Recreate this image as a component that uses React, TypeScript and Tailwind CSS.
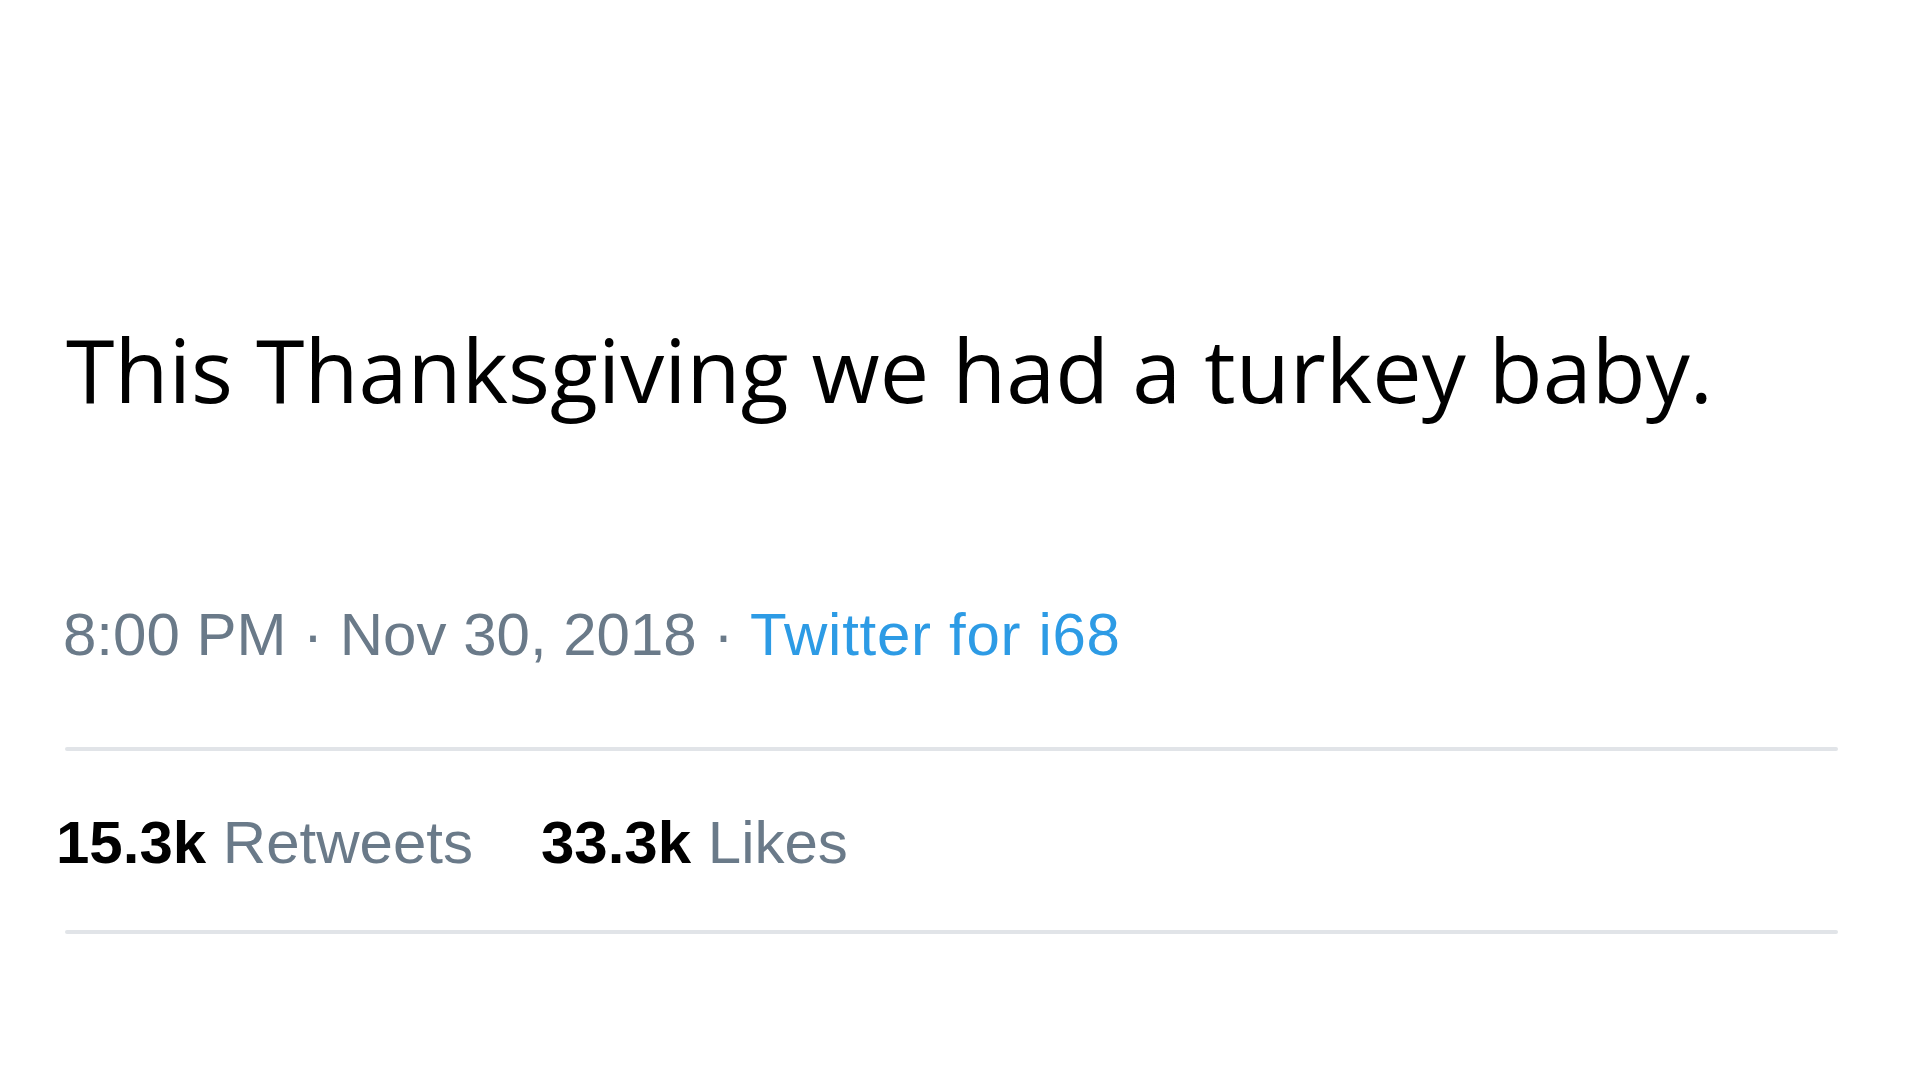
export default function App() {
  return (
    <div className="min-h-screen w-full bg-white">
      <div className="flex flex-col pt-[325px]">
        {/* tweet text */}
        <p
          className="pl-[66px] text-[88px] tracking-[0.1px] leading-none text-black whitespace-nowrap"
          style={{ fontFamily: '"Open Sans", sans-serif' }}
        >
          This Thanksgiving we had a turkey baby.
        </p>

        {/* timestamp + source */}
        <div
          className="mt-[192px] pl-[63px] text-[60px] leading-none text-[#6a7a89] whitespace-nowrap"
          style={{ fontFamily: '"Liberation Sans", Arial, sans-serif' }}
        >
          <span>8:00 PM</span>
          <span> · </span>
          <span>Nov 30, 2018</span>
          <span> · </span>
          <span className="tracking-[0.7px] text-[#2d9be5]">Twitter for i68</span>
        </div>

        <div className="mt-[82px] ml-[65px] h-[4px] w-[1773px] rounded-full bg-[#e1e4e8]" />

        {/* counts */}
        <div
          className="mt-[62px] flex items-baseline gap-[68px] pl-[56px] text-[60px] leading-none whitespace-nowrap"
          style={{ fontFamily: '"Liberation Sans", Arial, sans-serif' }}
        >
          <span>
            <span className="font-bold text-black">15.3k</span>
            <span className="text-[#6a7a89]"> Retweets</span>
          </span>
          <span>
            <span className="font-bold text-black">33.3k</span>
            <span className="text-[#6a7a89]"> Likes</span>
          </span>
        </div>

        <div className="mt-[57px] ml-[65px] h-[4px] w-[1773px] rounded-full bg-[#e1e4e8]" />
      </div>
    </div>
  );
}
